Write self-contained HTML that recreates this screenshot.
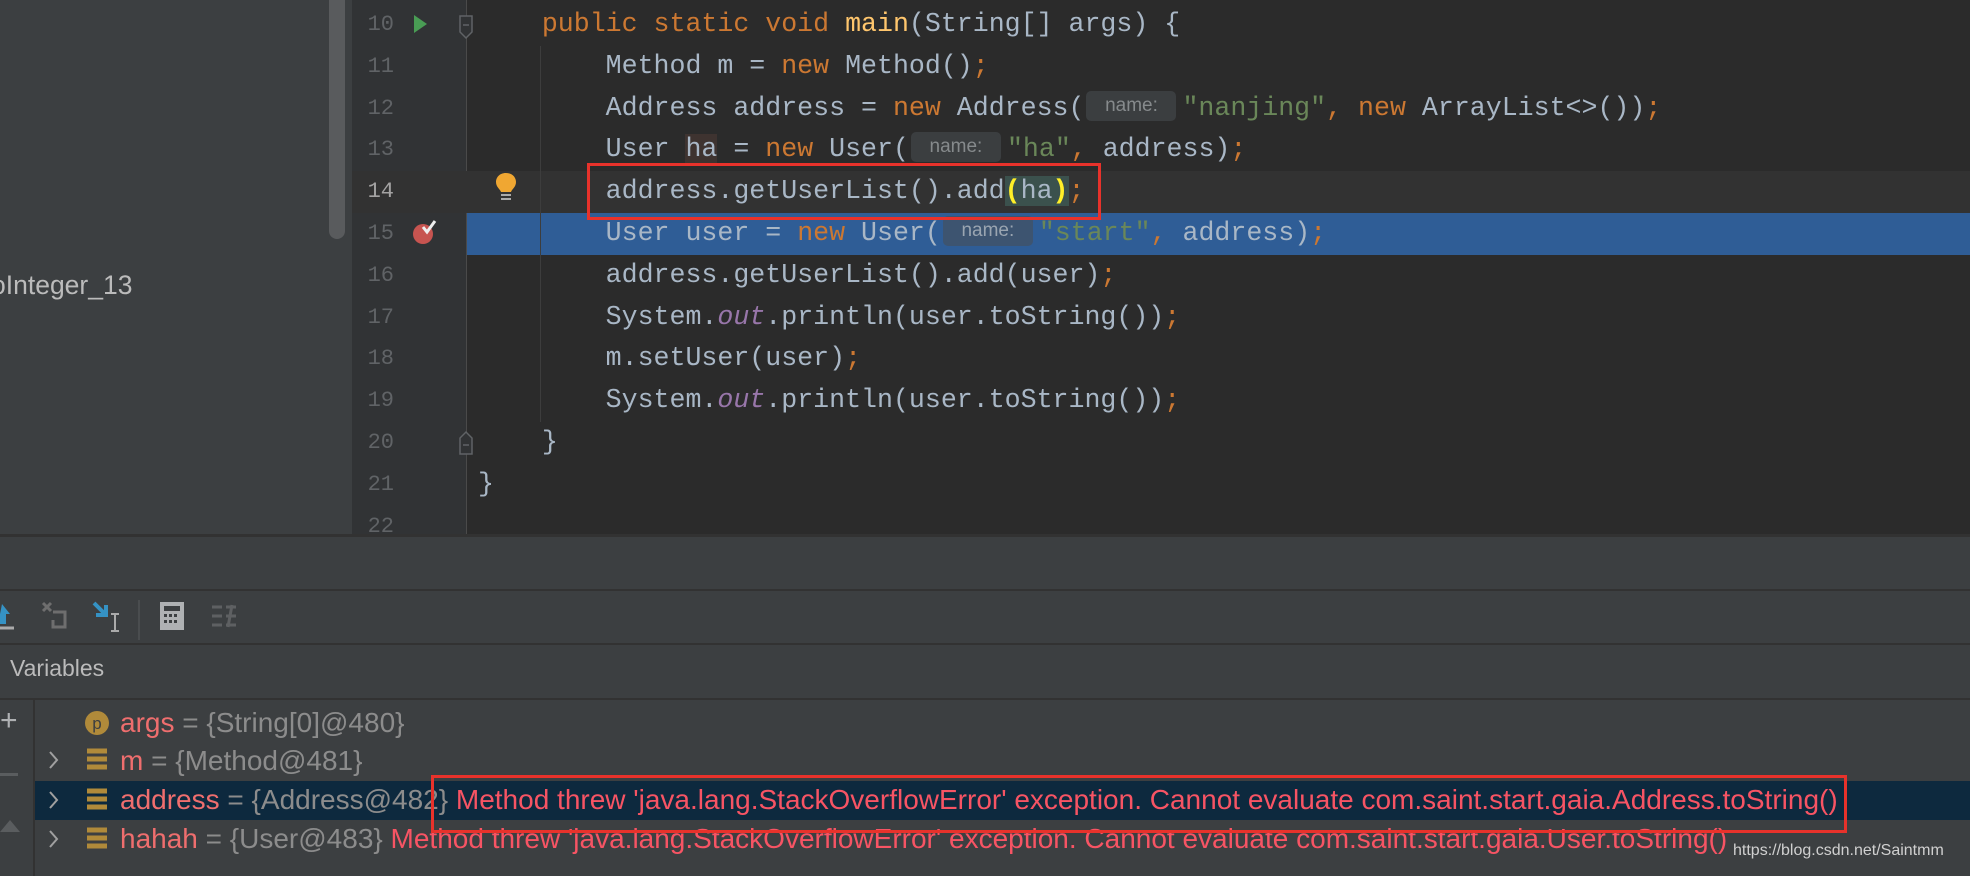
<!DOCTYPE html>
<html><head><meta charset="utf-8"><style>
*{margin:0;padding:0;box-sizing:border-box}
body{width:1970px;height:876px;overflow:hidden;background:#3c3f41;position:relative;font-family:"Liberation Sans",sans-serif}
.abs{position:absolute}
#left{left:0;top:0;width:352px;height:534px;background:#3c3f41}
#gut{left:352px;top:0;width:114px;height:534px;background:#313335}
#code{left:466px;top:0;width:1504px;height:534px;background:#2b2b2b;border-left:1px solid #4a4a4a}
.ln{position:absolute;left:352px;width:42px;text-align:right;font-family:"Liberation Mono",monospace;font-size:22px;color:#606366;line-height:41.8px}
.cl{position:absolute;left:478px;font-family:"Liberation Mono",monospace;font-size:26.6px;color:#a9b7c6;line-height:41.8px;white-space:pre}
.k{color:#cc7832}.s{color:#6a8759}.f{color:#ffc66d}.o{color:#9876aa;font-style:italic}
.h{display:inline-block;width:90px;margin:0 6px 0 2px;height:30px;line-height:30px;vertical-align:middle;background:#3b3e40;color:#868a8c;font-family:"Liberation Sans",sans-serif;font-size:19px;border-radius:5px;text-align:center;position:relative;top:-2px}
.rb{position:absolute;border:3px solid #e8322b}
.vrow{position:absolute;left:0;height:38.7px;line-height:38.7px;font-size:28px;white-space:pre;color:#8c8c8c}
.nm{color:#ef6e6e}.er{color:#f75464}
</style></head><body>
<div id="left" class="abs"></div>
<div class="abs" style="left:329px;top:0;width:16px;height:239px;background:#595b5d;border-radius:0 0 8px 8px"></div>
<div class="abs" style="left:-9px;top:270px;font-size:26.5px;color:#bbbbbb">oInteger_13</div>
<div id="gut" class="abs"></div>
<div id="code" class="abs"></div>
<div class="abs" style="left:352px;top:171px;width:1618px;height:42px;background:#323232"></div>
<div class="abs" style="left:467px;top:213px;width:1503px;height:42px;background:#2f5d96"></div>
<div class="abs" style="left:540px;top:46px;width:1px;height:376px;background:#3d3d3d"></div>
<div class="ln" style="top:4px">10</div>
<div class="ln" style="top:45.8px">11</div>
<div class="ln" style="top:87.6px">12</div>
<div class="ln" style="top:129.4px">13</div>
<div class="ln" style="top:171.2px;color:#a4a3a3">14</div>
<div class="ln" style="top:213px">15</div>
<div class="ln" style="top:254.8px">16</div>
<div class="ln" style="top:296.6px">17</div>
<div class="ln" style="top:338.4px">18</div>
<div class="ln" style="top:380.2px">19</div>
<div class="ln" style="top:422px">20</div>
<div class="ln" style="top:463.8px">21</div>
<div class="ln" style="top:505.6px;height:28px;overflow:hidden">22</div>
<svg class="abs" style="left:413px;top:13px" width="16" height="22"><path d="M1 2 L14 11 L1 20Z" fill="#499c54"/></svg>
<svg class="abs" style="left:458px;top:14px" width="16" height="26"><path d="M2 2 H14 V18 L8 24 L2 18Z" fill="#313335" stroke="#606366" stroke-width="1.5"/><path d="M5 11H11" stroke="#606366" stroke-width="1.5"/></svg>
<svg class="abs" style="left:458px;top:430px" width="16" height="26"><path d="M2 24 H14 V8 L8 2 L2 8Z" fill="#313335" stroke="#606366" stroke-width="1.5"/><path d="M5 15H11" stroke="#606366" stroke-width="1.5"/></svg>
<svg class="abs" style="left:495px;top:172px" width="22" height="30"><path d="M11 1 C4 1 1 6 1 10 C1 15 5 17 6 20 H16 C17 17 21 15 21 10 C21 6 18 1 11 1Z" fill="#f0a732"/><path d="M6 23H16M6 27H16" stroke="#aaa" stroke-width="2"/></svg>
<svg class="abs" style="left:412px;top:218px" width="26" height="28"><circle cx="11" cy="16" r="10" fill="#c75450"/><path d="M11 9 L15 14 L23 3" stroke="#eee" stroke-width="3" fill="none"/></svg>
<div class="cl" style="top:4px">    <span class="k">public static void</span> <span class="f">main</span>(String[] args) {</div>
<div class="cl" style="top:45.8px">        Method m = <span class="k">new</span> Method()<span class="k">;</span></div>
<div class="cl" style="top:87.6px">        Address address = <span class="k">new</span> Address(<span class="h">name:</span><span class="s">"nanjing"</span><span class="k">,</span> <span class="k">new</span> ArrayList&lt;&gt;())<span class="k">;</span></div>
<div class="cl" style="top:129.4px">        User <span style="background:#3e3330">ha</span> = <span class="k">new</span> User(<span class="h">name:</span><span class="s">"ha"</span><span class="k">,</span> address)<span class="k">;</span></div>
<div class="cl" style="top:171.2px">        address.getUserList().add<span style="color:#ffef28;font-weight:bold;background:#3b514d">(</span><span style="background:#3b514d">ha</span><span style="color:#ffef28;font-weight:bold;background:#3b514d">)</span><span class="k">;</span></div>
<div class="cl" style="top:213px">        User user = <span class="k">new</span> User(<span class="h" style="background:#3d5470;color:#9aa5b1">name:</span><span class="s">"start"</span><span class="k">,</span> address)<span class="k">;</span></div>
<div class="cl" style="top:254.8px">        address.getUserList().add(user)<span class="k">;</span></div>
<div class="cl" style="top:296.6px">        System.<span class="o">out</span>.println(user.toString())<span class="k">;</span></div>
<div class="cl" style="top:338.4px">        m.setUser(user)<span class="k">;</span></div>
<div class="cl" style="top:380.2px">        System.<span class="o">out</span>.println(user.toString())<span class="k">;</span></div>
<div class="cl" style="top:422px">    }</div>
<div class="cl" style="top:463.8px">}</div>
<div class="rb" style="left:587px;top:163px;width:514px;height:57px"></div>
<div class="abs" style="left:0;top:534px;width:1970px;height:3px;background:#323232"></div>
<div class="abs" style="left:0;top:589px;width:1970px;height:2px;background:#323232"></div>
<div class="abs" style="left:0;top:643px;width:1970px;height:2px;background:#323232"></div>
<div class="abs" style="left:0;top:698px;width:1970px;height:2px;background:#323232"></div>
<svg class="abs" style="left:0;top:600px" width="20" height="32"><path d="M2 4 L10 14 H6 V24 H-2Z" fill="#3592c4"/><path d="M0 28H14" stroke="#aaa" stroke-width="3"/></svg>
<svg class="abs" style="left:40px;top:600px" width="28" height="30"><path d="M3 3 L11 11 M11 3 L3 11" stroke="#6e6e6e" stroke-width="3"/><path d="M13 12 H25 V27 H13 V20" stroke="#6e6e6e" stroke-width="3" fill="none"/></svg>
<svg class="abs" style="left:92px;top:600px" width="32" height="34"><path d="M2 3 L14 15 M14 5 V15 H4" stroke="#3592c4" stroke-width="4" fill="none"/><path d="M19 14 H27 M23 14 V31 M19 31 H27" stroke="#aaa" stroke-width="2"/></svg>
<div class="abs" style="left:138px;top:600px;width:2px;height:40px;background:#4a4d4f"></div>
<svg class="abs" style="left:159px;top:601px" width="26" height="30"><rect x="1" y="1" width="24" height="28" fill="#afb1b3"/><rect x="5" y="5" width="16" height="5" fill="#3c3f41"/><g fill="#3c3f41"><rect x="5" y="13" width="3" height="3"/><rect x="10" y="13" width="3" height="3"/><rect x="15" y="13" width="3" height="3"/><rect x="5" y="19" width="3" height="3"/><rect x="10" y="19" width="3" height="3"/><rect x="15" y="19" width="3" height="3"/></g></svg>
<svg class="abs" style="left:210px;top:603px" width="28" height="26"><path d="M2 4H12M2 13H12M2 22H12M16 4H26M16 13H26M16 22H26M18 24 L22 2" stroke="#5e6062" stroke-width="3"/></svg>
<div class="abs" style="left:10px;top:655px;font-size:23px;color:#bbbbbb">Variables</div>
<div class="abs" style="left:33px;top:700px;width:2px;height:176px;background:#323232"></div>
<div class="abs" style="left:0;top:706px;font-size:30px;color:#afb1b3;line-height:30px">+</div>
<div class="abs" style="left:0;top:773px;width:18px;height:3px;background:#5a5d5f"></div>
<svg class="abs" style="left:0;top:818px" width="22" height="16"><path d="M0 14 L10 2 L20 14Z" fill="#5a5d5f"/></svg>
<div class="abs" style="left:35px;top:781px;width:1935px;height:39px;background:#0d293e"></div>
<svg class="abs" style="left:84px;top:710px" width="26" height="26"><circle cx="13" cy="13" r="12" fill="#b08a3a"/><text x="13" y="19" font-family="Liberation Sans" font-size="17" fill="#3c3f41" text-anchor="middle">p</text></svg>
<div class="vrow" style="left:120px;top:704px"><span class="nm">args</span> = {String[0]@480}</div>
<svg class="abs" style="left:47px;top:749px" width="14" height="22"><path d="M3 3 L10 11 L3 19" stroke="#a0a0a0" stroke-width="2" fill="none"/></svg>
<svg class="abs" style="left:87px;top:748px" width="22" height="24"><path d="M0 3H20M0 11H20M0 19H20" stroke="#b08a3a" stroke-width="5"/></svg>
<div class="vrow" style="left:120px;top:742px"><span class="nm">m</span> = {Method@481}</div>
<svg class="abs" style="left:47px;top:789px" width="14" height="22"><path d="M3 3 L10 11 L3 19" stroke="#a0a0a0" stroke-width="2" fill="none"/></svg>
<svg class="abs" style="left:87px;top:788px" width="22" height="24"><path d="M0 3H20M0 11H20M0 19H20" stroke="#b08a3a" stroke-width="5"/></svg>
<div class="vrow" style="left:120px;top:781px"><span class="nm">address</span> = {Address@482} <span class="er">Method threw 'java.lang.StackOverflowError' exception. Cannot evaluate com.saint.start.gaia.Address.toString()</span></div>
<svg class="abs" style="left:47px;top:828px" width="14" height="22"><path d="M3 3 L10 11 L3 19" stroke="#a0a0a0" stroke-width="2" fill="none"/></svg>
<svg class="abs" style="left:87px;top:827px" width="22" height="24"><path d="M0 3H20M0 11H20M0 19H20" stroke="#b08a3a" stroke-width="5"/></svg>
<div class="vrow" style="left:120px;top:820px"><span class="nm">hahah</span> = {User@483} <span class="er">Method threw 'java.lang.StackOverflowError' exception. Cannot evaluate com.saint.start.gaia.User.toString()</span></div>
<div class="rb" style="left:431px;top:775px;width:1416px;height:58px"></div>
<div class="abs" style="left:1733px;top:842px;font-size:16px;color:#d0d0d0">https://blog.csdn.net/Saintmm</div>
</body></html>
